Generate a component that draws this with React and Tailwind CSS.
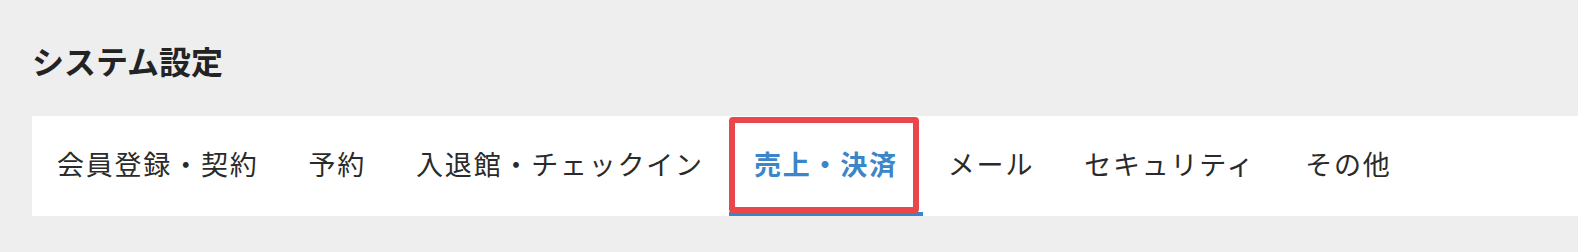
const tabs = [
  '会員登録・契約',
  '予約',
  '入退館・チェックイン',
  '売上・決済',
  'メール',
  'セキュリティ',
  'その他',
];

const ACTIVE = '売上・決済';

function Tab({ label, active }) {
  return (
    <div
      className={`relative flex items-center h-full px-[25px] pb-[2px] border-b-4 ${
        active ? 'border-[#3a86c9] text-[#3a86c9] font-bold' : 'border-transparent text-[#2a2a2a]'
      }`}
    >
      <span className="text-[27px] tracking-[0.066em] leading-none">{label}</span>
      {/* 注釈用の赤枠 */}
      {active && (
        <div className="absolute left-0 top-[1px] w-[190px] h-[96px] border-[6px] border-[#e8474c] rounded-[4px] pointer-events-none" />
      )}
    </div>
  );
}

export default function App() {
  return (
    <div
      className="min-h-[252px] bg-[#eeeeee] pl-[32px] pt-[36px]"
      style={{ fontFamily: '"Noto Sans CJK JP", "Noto Sans", sans-serif' }}
    >
      <h1 className="text-[32px] font-bold leading-[48px] text-[#232323]">システム設定</h1>
      <nav className="mt-[32px] h-[100px] bg-white flex">
        {tabs.map((t) => (
          <Tab key={t} label={t} active={t === ACTIVE} />
        ))}
      </nav>
    </div>
  );
}
